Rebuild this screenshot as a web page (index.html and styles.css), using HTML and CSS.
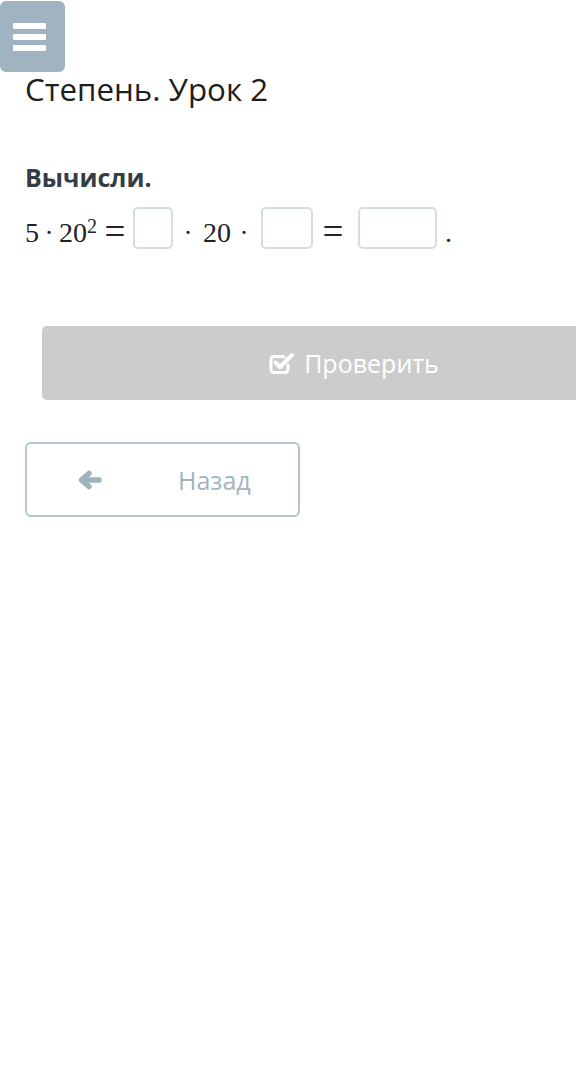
FILE: index.html
```html
<!DOCTYPE html>
<html lang="ru">
<head>
<meta charset="utf-8">
<title>Степень. Урок 2</title>
<link rel="stylesheet" href="styles.css">
</head>
<body>
<div class="menu-btn" aria-label="Меню">
  <span class="bar"></span><span class="bar"></span><span class="bar"></span>
</div>
<main class="content">
  <h1 class="title">Степень. Урок 2</h1>
  <h2 class="task">Вычисли.</h2>
  <div class="math">
    <span class="num n5">5</span>
    <span class="op dot1">·</span>
    <span class="num n20">20<sup class="sup">2</sup></span>
    <span class="op eq eq1">=</span>
    <span class="box b1"></span>
    <span class="op dot2">·</span>
    <span class="num n20b">20</span>
    <span class="op dot3">·</span>
    <span class="box b2"></span>
    <span class="op eq eq2">=</span>
    <span class="box b3"></span>
    <span class="num period">.</span>
  </div>
  <button class="check-btn" type="button">
    <svg class="check-icon" viewBox="0 0 26 22" width="26" height="22" aria-hidden="true">
      <path d="M19 13v4.5a3 3 0 0 1-3 3H5a3 3 0 0 1-3-3V7.5a3 3 0 0 1 3-3h10" fill="none" stroke="#fff" stroke-width="3" stroke-linecap="round"/>
      <path d="M6.5 10.5l4.5 4.5 12-12" fill="none" stroke="#fff" stroke-width="4" stroke-linecap="round" stroke-linejoin="round"/>
    </svg>
    <span>Проверить</span>
  </button>
  <button class="back-btn" type="button">
    <svg class="arrow" viewBox="0 0 26 20" width="26" height="20" aria-hidden="true">
      <path d="M6 10H22" fill="none" stroke="#9fb3bd" stroke-width="5.5" stroke-linecap="round"/>
      <path d="M12 3.5L4.5 10L12 16.5" fill="none" stroke="#9fb3bd" stroke-width="5.5" stroke-linecap="round" stroke-linejoin="round"/>
    </svg>
    <span class="back-text">Назад</span>
  </button>
</main>
</body>
</html>
```
FILE: styles.css
```css
html { overflow-x: hidden; background: #fff; }
body {
  margin: 0;
  font-family: "Open Sans", "Noto Sans", sans-serif;
  color: #222;
  overflow-x: hidden;
}
.menu-btn {
  width: 65px;
  height: 71px;
  margin-top: 1px;
  background: #9fb4c0;
  border-radius: 6px;
  display: flex;
  flex-direction: column;
  justify-content: center;
  align-items: flex-start;
  gap: 5px;
  padding-left: 13px;
  box-sizing: border-box;
}
.bar {
  display: block;
  width: 33px;
  height: 6px;
  background: #fff;
  border-radius: 1px;
}
.content {
  padding-left: 25px;
}
.title {
  margin: 0;
  font-size: 31.3px;
  line-height: 34px;
  font-weight: 400;
  color: #1e1e1e;
}
.task {
  margin: 56px 0 0;
  font-size: 25px;
  line-height: 30px;
  font-weight: 700;
  color: #343c44;
}
.math {
  margin-top: 15px;
  height: 42px;
  display: flex;
  align-items: flex-start;
  font-family: "Liberation Serif", "Times New Roman", serif;
  font-size: 28px;
  color: #222;
}
.num, .op {
  display: block;
  line-height: 42px;
  padding-top: 5px;
  white-space: nowrap;
}
.op {
  font-family: "DejaVu Serif", serif;
  text-align: center;
  font-size: 24px;
}
.op.eq {
  font-family: "Liberation Serif", serif;
  font-size: 37px;
  line-height: 37px;
  padding-top: 6px;
}
.n5 { width: 14px; }
.dot1 { width: 20px; }
.n20 { width: 38px; }
.sup {
  font-size: 20px;
  vertical-align: 9px;
  line-height: 0;
}
.eq1 { width: 36px; }
.dot2 { width: 30px; }
.n20b { width: 28px; }
.dot3 { width: 26px; }
.eq2 { width: 40px; }
.box {
  display: block;
  height: 42px;
  box-sizing: border-box;
  border: 2px solid #d2e1dd;
  border-radius: 5px;
  background: #fff;
}
.b1 { width: 40px; }
.b2 { width: 52px; margin-left: 4px; }
.b3 { width: 79px; margin-left: 5px; }
.period { margin-left: 8px; }
.check-btn {
  display: flex;
  align-items: center;
  justify-content: center;
  gap: 9px;
  margin: 77px 0 0 17px;
  width: 624px;
  height: 74px;
  border: none;
  border-radius: 5px;
  background: #cccccc;
  color: #fff;
  font-family: "Open Sans", sans-serif;
  font-size: 25px;
  padding: 0;
}
.check-icon { flex: none; }
.back-btn {
  display: flex;
  align-items: center;
  margin-top: 42px;
  width: 275px;
  height: 75px;
  box-sizing: border-box;
  border: 2px solid #b3c5cb;
  border-radius: 6px;
  background: #fff;
  padding: 0 0 0 50px;
  font-family: "Open Sans", sans-serif;
  font-size: 25px;
  color: #a3b5be;
}
.arrow { flex: none; }
.back-text { margin-left: 75px; }
```
